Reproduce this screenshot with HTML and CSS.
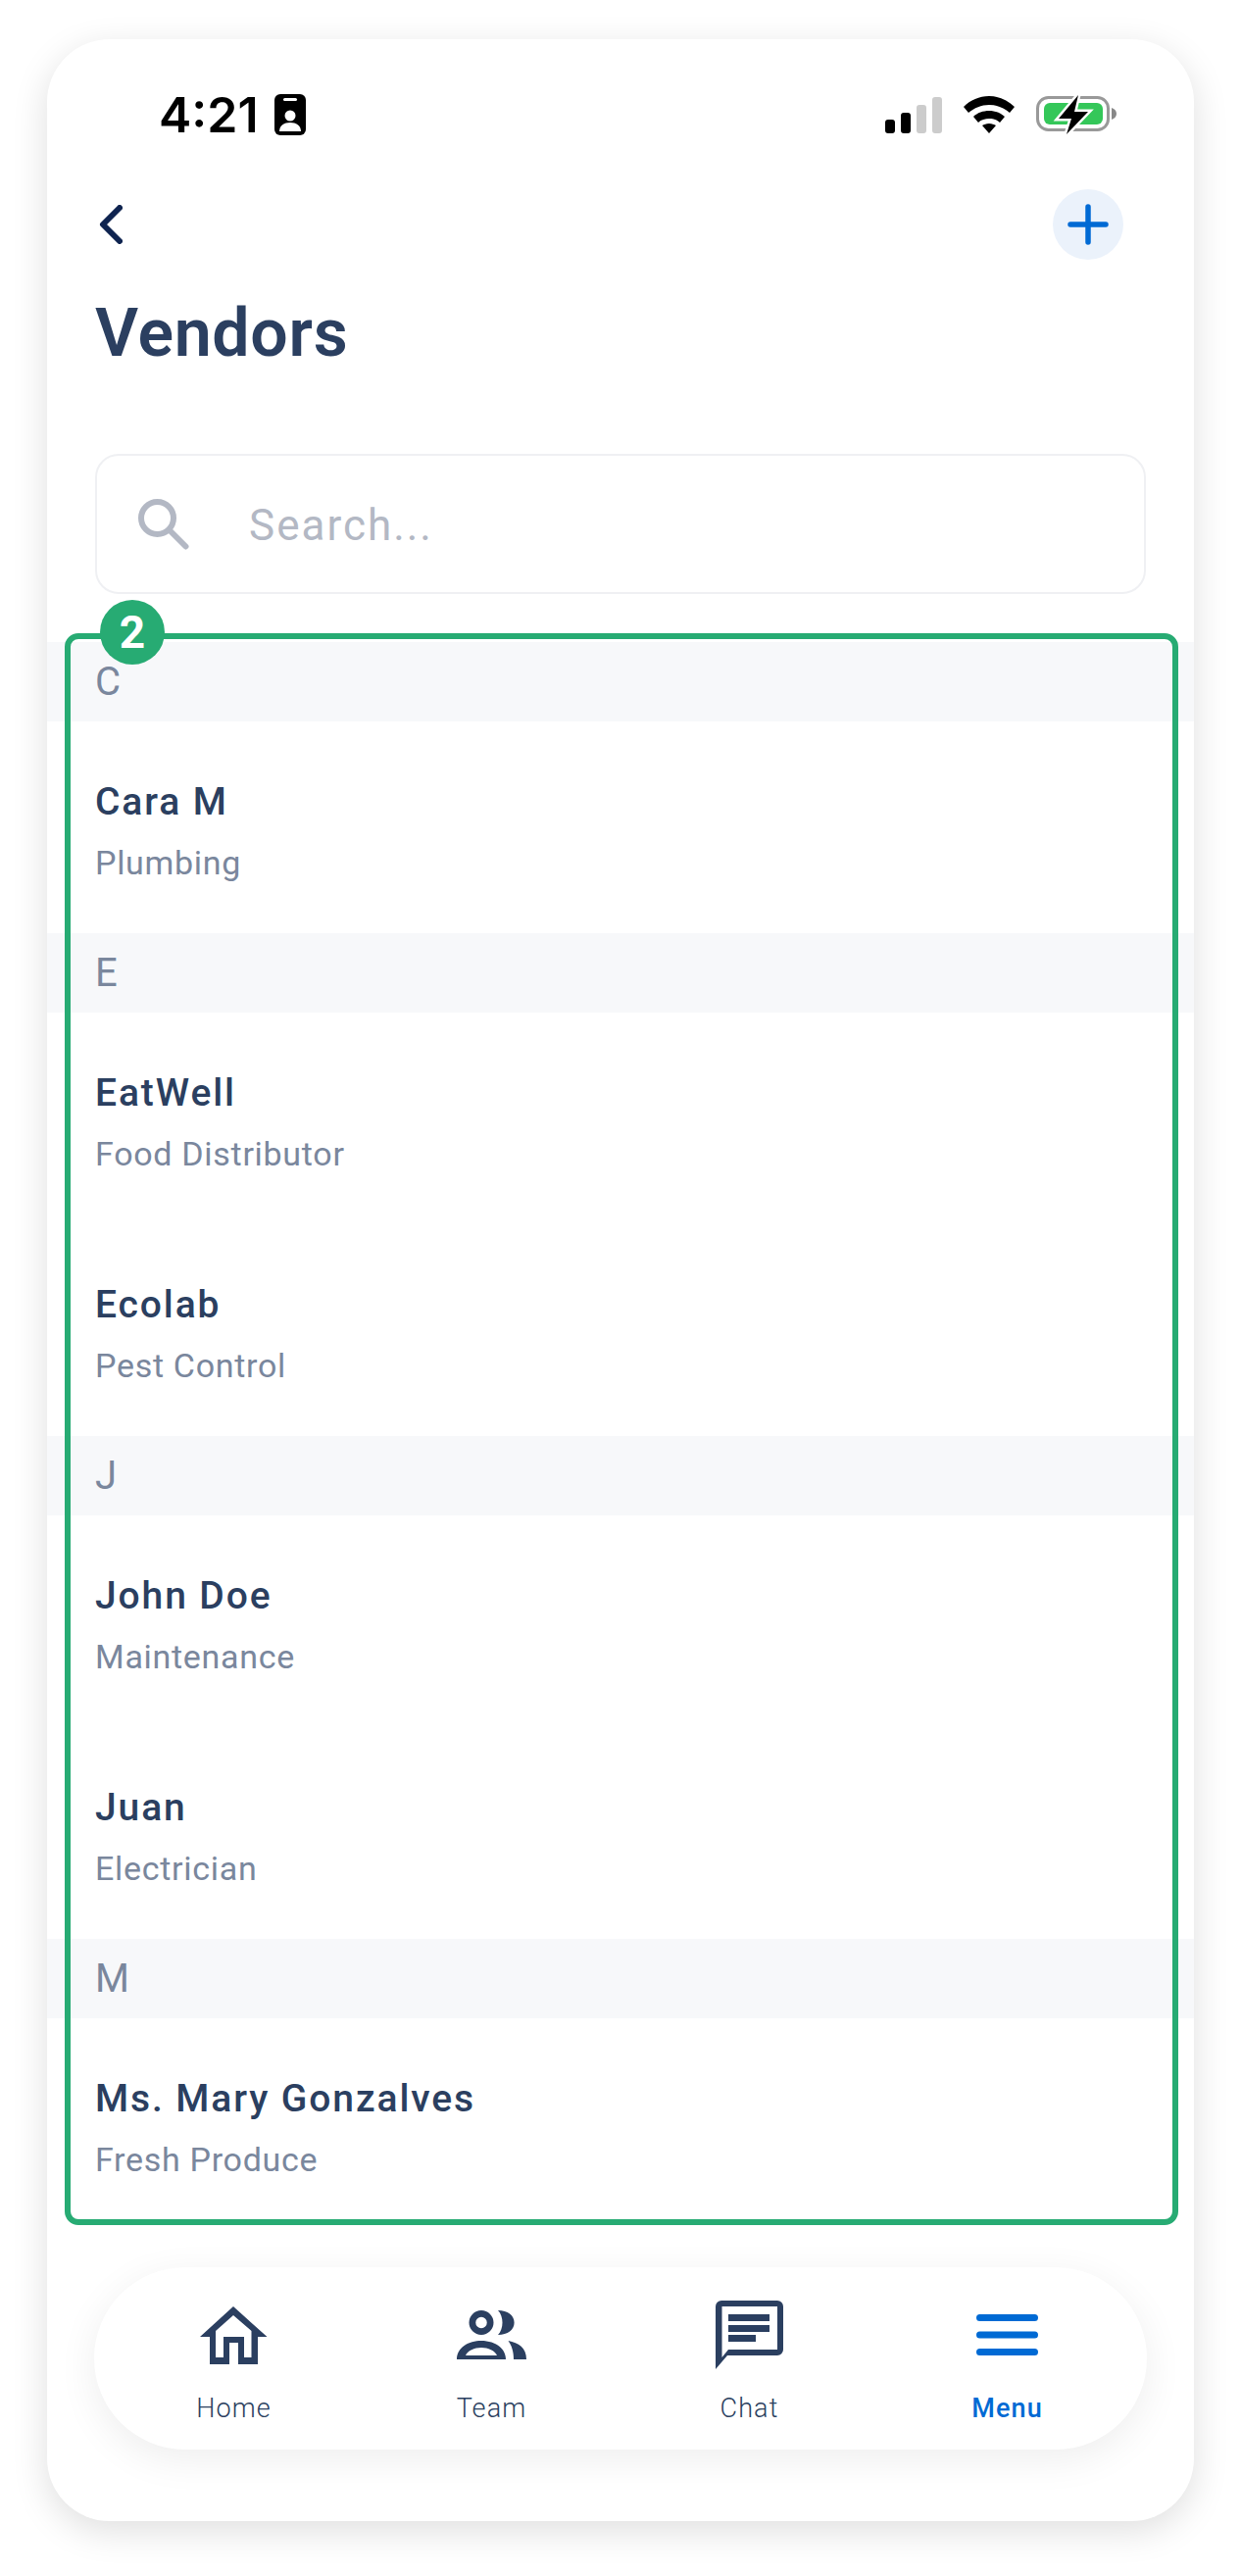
FILE: index.html
```html
<!DOCTYPE html>
<html lang="en">
<head>
    <meta charset="UTF-8">
    <meta name="viewport" content="width=device-width, initial-scale=1.0">
    <title>Vendors</title>
    <link rel="stylesheet" href="styles.css">
</head>
<body>

<div class="phone">

    <div class="status-bar">
        <div class="status-left">
            <span class="status-time">4:21</span>
            <svg class="icon-badge" width="32" height="42" viewBox="0 0 32 42">
                <rect width="32" height="42" rx="6" fill="#000"/>
                <rect x="9" y="4" width="14" height="3" rx="1.5" fill="#fff"/>
                <circle cx="16" cy="22" r="5.5" fill="#fff"/>
                <path d="M5 38c0-6 5-9 11-9s11 3 11 9z" fill="#fff"/>
            </svg>
        </div>
        <div class="status-right">
            <svg width="58" height="37" viewBox="0 0 58 37">
                <rect x="0" y="23" width="10" height="14" rx="3" fill="#000"/>
                <rect x="16" y="16" width="10" height="21" rx="3" fill="#000"/>
                <rect x="32" y="8" width="10" height="29" rx="3" fill="#ccc"/>
                <rect x="48" y="0" width="10" height="37" rx="3" fill="#ccc"/>
            </svg>
            <svg width="52" height="38" viewBox="0 0 52 38">
                <path d="M26 0C16 0 7 4 0 11l5 6c6-5 13-8 21-8s15 3 21 8l5-6C45 4 36 0 26 0z" fill="#000"/>
                <path d="M26 15c-6 0-12 2-16 6l5 6c3-3 7-4 11-4s8 1 11 4l5-6c-4-4-10-6-16-6z" fill="#000"/>
                <path d="M26 28c-3 0-5 1-7 2l7 8 7-8c-2-1-4-2-7-2z" fill="#000"/>
            </svg>
            <svg width="82" height="40" viewBox="0 0 82 40">
                <rect x="1.5" y="2.5" width="72" height="33" rx="11" fill="none" stroke="#999" stroke-width="3"/>
                <rect x="8" y="8" width="60" height="22" rx="6" fill="#34c759"/>
                <path d="M77 13c3 1 5 3 5 6s-2 5-5 6z" fill="#888"/>
                <path d="M43 0L23 24h13l-5 16 22-23H39z" fill="#000" stroke="#fff" stroke-width="5" paint-order="stroke"/>
            </svg>
        </div>
    </div>

    <div class="top-actions">
        <svg width="24" height="40" viewBox="0 0 24 40">
            <path d="M21 3L4 20l17 17" fill="none" stroke="#0f2450" stroke-width="6" stroke-linecap="round" stroke-linejoin="round"/>
        </svg>
        <div class="add-btn">
            <svg width="42" height="42" viewBox="0 0 42 42">
                <path d="M21 3v36M3 21h36" fill="none" stroke="#006ad4" stroke-width="5.5" stroke-linecap="round"/>
            </svg>
        </div>
    </div>

    <h1 class="page-title">Vendors</h1>

    <div class="search-box">
        <svg width="52" height="52" viewBox="0 0 52 52">
            <circle cx="19.5" cy="19.5" r="16.5" fill="none" stroke="#b3b8c4" stroke-width="6"/>
            <path d="M32 32l16.5 16.5" fill="none" stroke="#b3b8c4" stroke-width="6" stroke-linecap="round"/>
        </svg>
        <span class="search-placeholder">Search...</span>
    </div>

    <div class="vendor-list">
        <div class="highlight-box"><span class="highlight-num">2</span></div>

        <div class="letter-row">C</div>
        <div class="vendor-row">
            <div class="vendor-name">Cara M</div>
            <div class="vendor-type">Plumbing</div>
        </div>

        <div class="letter-row">E</div>
        <div class="vendor-row">
            <div class="vendor-name">EatWell</div>
            <div class="vendor-type">Food Distributor</div>
        </div>
        <div class="vendor-row">
            <div class="vendor-name">Ecolab</div>
            <div class="vendor-type">Pest Control</div>
        </div>

        <div class="letter-row">J</div>
        <div class="vendor-row">
            <div class="vendor-name">John Doe</div>
            <div class="vendor-type">Maintenance</div>
        </div>
        <div class="vendor-row">
            <div class="vendor-name">Juan</div>
            <div class="vendor-type">Electrician</div>
        </div>

        <div class="letter-row">M</div>
        <div class="vendor-row vendor-row-last">
            <div class="vendor-name">Ms. Mary Gonzalves</div>
            <div class="vendor-type">Fresh Produce</div>
        </div>
    </div>

    <nav class="tabbar">
        <div class="tab">
            <div class="tab-icon">
                <svg width="69" height="59" viewBox="0 0 69 59">
                    <path d="M34 0L68.5 31H59V59H39V37H30V59H10V31H0z M34 9L52.5 25V52H45V31H24V52H16V25z" fill="#2b3f60" fill-rule="evenodd"/>
                </svg>
            </div>
            <span class="tab-label">Home</span>
        </div>
        <div class="tab">
            <div class="tab-icon">
                <svg width="71" height="50" viewBox="0 0 71 50">
                    <path d="M25 0a12.5 12.5 0 1 0 0 25 12.5 12.5 0 0 0 0-25zm0 6.750a5.750 5.750 0 1 1 0 11.500 5.750 5.750 0 0 1 0-11.500z" fill="#2b3f60" fill-rule="evenodd"/>
                    <path d="M42 0c10 0 16.600 5 16.600 12.500S52 25 42 25c3-3 4.500-8 4.500-12.500S45 3 42 0z" fill="#2b3f60"/>
                    <path d="M0 50c0-12 12-19 25-19s25 7 25 19zM9 46h32c-2-5-9-8-16-8s-14 3-16 8z" fill="#2b3f60" fill-rule="evenodd"/>
                    <path d="M52.500 31C63 33 71 38 71 50H58c0-8-2-14-5.500-19z" fill="#2b3f60"/>
                </svg>
            </div>
            <span class="tab-label">Team</span>
        </div>
        <div class="tab">
            <div class="tab-icon">
                <svg width="69" height="70" viewBox="0 0 69 70">
                    <path d="M6 0H63a6 6 0 0 1 6 6V50a6 6 0 0 1-6 6H12L0 70V6a6 6 0 0 1 6-6zM6.500 6V58L13 50H63V6z" fill="#2b3f60" fill-rule="evenodd"/>
                    <path d="M13 14H55V21H13zM13 25H55V32H13zM13 35H41V42H13z" fill="#2b3f60"/>
                </svg>
            </div>
            <span class="tab-label">Chat</span>
        </div>
        <div class="tab tab-active">
            <div class="tab-icon">
                <svg width="63" height="42" viewBox="0 0 63 42">
                    <path d="M3.500 3.500H59.500M3.500 21H59.500M3.500 38.500H59.500" fill="none" stroke="#006ad4" stroke-width="7" stroke-linecap="round"/>
                </svg>
            </div>
            <span class="tab-label">Menu</span>
        </div>
    </nav>

</div>

</body>
</html>
```

FILE: styles.css
```css
body {
  margin: 0;
  background-color: #fff;
  font-family: Roboto, sans-serif;
}

.phone {
  width: 1170px;
  height: 2532px;
  margin: 40px 48px 56px;
  background-color: #fff;
  border-radius: 64px;
  box-shadow: 0 10px 36px rgba(0, 0, 0, 0.13);
  overflow: hidden;
}

.status-bar {
  display: flex;
  justify-content: space-between;
  align-items: center;
  height: 42px;
  padding: 56px 79px 0 114px;
}

.status-left {
  display: flex;
  align-items: center;
  gap: 16px;
}

.status-time {
  font-family: Inter, sans-serif;
  font-size: 50px;
  font-weight: 600;
  line-height: 42px;
  color: #000;
}

.status-right {
  display: flex;
  align-items: center;
  gap: 22px;
}

.top-actions {
  display: flex;
  justify-content: space-between;
  align-items: center;
  margin-top: 55px;
  padding: 0 72px 0 53px;
  height: 72px;
}

.add-btn {
  display: flex;
  justify-content: center;
  align-items: center;
  width: 72px;
  height: 72px;
  border-radius: 50%;
  background-color: #ebf2fb;
}

.page-title {
  margin: 36px 0 0 49px;
  font-size: 68px;
  font-weight: 600;
  letter-spacing: 0.7px;
  line-height: 78px;
  color: #2b3f60;
}

.search-box {
  display: flex;
  align-items: center;
  gap: 61px;
  height: 139px;
  margin: 84px 49px 0;
  padding-left: 42px;
  border: 2px solid #eff0f3;
  border-radius: 24px;
}

.search-placeholder {
  padding-top: 2px;
  font-size: 44px;
  letter-spacing: 2px;
  color: #b3b8c4;
}

.vendor-list {
  position: relative;
  margin-top: 49px;
}

.highlight-box {
  position: absolute;
  top: -9px;
  left: 18px;
  right: 16px;
  height: 1624px;
  border: 6px solid #27ab73;
  border-radius: 14px;
  box-sizing: border-box;
}

.highlight-num {
  position: absolute;
  top: -40px;
  left: 30px;
  width: 66px;
  height: 66px;
  border-radius: 50%;
  background-color: #27ab73;
  color: #fff;
  font-size: 46px;
  font-weight: 700;
  line-height: 66px;
  text-align: center;
}

.letter-row {
  height: 81px;
  padding-left: 49px;
  background-color: #f7f8fa;
  font-size: 40px;
  line-height: 81px;
  color: #7a879d;
}

.vendor-row {
  box-sizing: border-box;
  height: 216px;
  padding: 58px 49px 0;
}

.vendor-name {
  font-size: 39px;
  font-weight: 500;
  letter-spacing: 1.9px;
  line-height: 48px;
  color: #2b3f60;
}

.vendor-type {
  margin-top: 14px;
  font-size: 34px;
  letter-spacing: 0.7px;
  line-height: 48px;
  color: #7a879d;
}

.vendor-row-last {
  height: 212px;
}

.tabbar {
  display: grid;
  grid-template-columns: repeat(4, 263px);
  box-sizing: border-box;
  width: 1074px;
  height: 186px;
  margin: 42px 0 0 48px;
  padding: 34px 11px 0;
  border-radius: 93px;
  background-color: #fff;
  box-shadow: 0 10px 40px rgba(0, 0, 0, 0.07);
}

.tab {
  display: flex;
  flex-direction: column;
  align-items: center;
}

.tab-icon {
  display: flex;
  justify-content: center;
  align-items: center;
  height: 70px;
  margin-bottom: 23px;
}

.tab-label {
  font-size: 27px;
  font-weight: 300;
  letter-spacing: 1.1px;
  line-height: 34px;
  color: #2b3f60;
}

.tab-active .tab-label {
  font-weight: 500;
  color: #006ad4;
}
```
